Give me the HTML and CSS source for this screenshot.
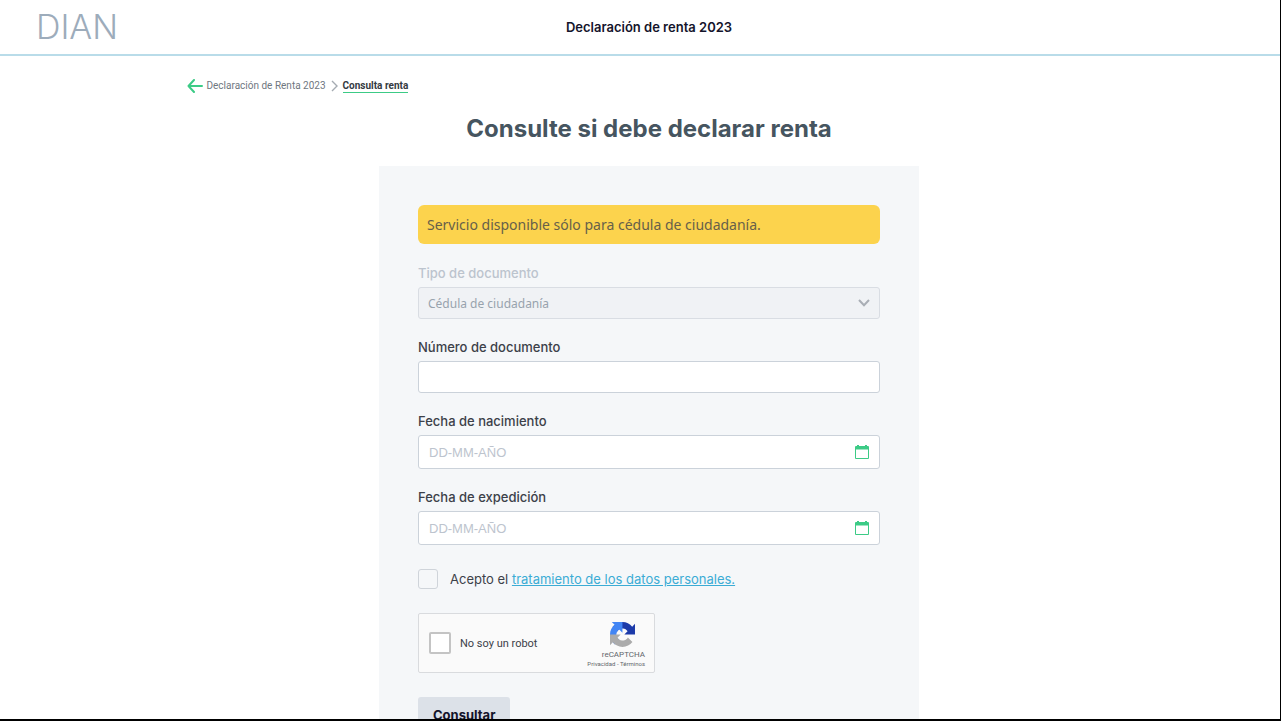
FILE: index.html
```html
<!DOCTYPE html>
<html lang="es">
<head>
    <meta charset="UTF-8">
    <meta name="viewport" content="width=device-width, initial-scale=1.0">
    <title>Declaración de renta 2023</title>
    <link rel="stylesheet" href="styles.css">
</head>
<body>
    <header class="header">
        <a class="logo" href="#">DIAN</a>
        <p class="header-title">Declaración de renta 2023</p>
    </header>

    <main class="main-content">
        <nav class="breadcrumb" aria-label="Ruta">
            <a class="back" href="#" aria-label="Volver">
                <svg width="16" height="14" viewBox="0 0 16 14" fill="none" stroke="#3ccb86" stroke-width="2" stroke-linecap="round" stroke-linejoin="round">
                    <path d="M15 7H1.5M7 1L1.5 7L7 13"/>
                </svg>
            </a>
            <a href="#">Declaración de Renta 2023</a>
            <svg class="separator" width="7" height="12" viewBox="0 0 7 12" fill="none" stroke="#a5abb2" stroke-width="1.4">
                <path d="M1 1L6 6L1 11"/>
            </svg>
            <a class="current" href="#" aria-current="page">Consulta renta</a>
        </nav>

        <h1>Consulte si debe declarar renta</h1>

        <form class="form-card">
            <div class="alert">Servicio disponible sólo para cédula de ciudadanía.</div>

            <div class="form-group disabled">
                <label for="tipo">Tipo de documento</label>
                <div class="select-box">
                    <select id="tipo" disabled>
                        <option>Cédula de ciudadanía</option>
                    </select>
                    <svg width="12" height="8" viewBox="0 0 12 8" fill="none" stroke="#a9aeb5" stroke-width="2">
                        <path d="M1 1L6 6.2L11 1"/>
                    </svg>
                </div>
            </div>

            <div class="form-group">
                <label for="numero">Número de documento</label>
                <input class="text-input" type="text" id="numero">
            </div>

            <div class="form-group">
                <label for="nacimiento">Fecha de nacimiento</label>
                <div class="date-box">
                    <input type="text" id="nacimiento" placeholder="DD-MM-AÑO">
                    <button type="button" aria-label="Abrir calendario">
                        <svg width="14" height="14" viewBox="0 0 14 14">
                            <path fill="#3ccb86" fill-rule="evenodd" d="M2 0H4V1H10V0H12V1H13Q14 1 14 2V13Q14 14 13 14H1Q0 14 0 13V2Q0 1 1 1H2ZM1 4.5V13H13V4.5Z"/>
                        </svg>
                    </button>
                </div>
            </div>

            <div class="form-group">
                <label for="expedicion">Fecha de expedición</label>
                <div class="date-box">
                    <input type="text" id="expedicion" placeholder="DD-MM-AÑO">
                    <button type="button" aria-label="Abrir calendario">
                        <svg width="14" height="14" viewBox="0 0 14 14">
                            <path fill="#3ccb86" fill-rule="evenodd" d="M2 0H4V1H10V0H12V1H13Q14 1 14 2V13Q14 14 13 14H1Q0 14 0 13V2Q0 1 1 1H2ZM1 4.5V13H13V4.5Z"/>
                        </svg>
                    </button>
                </div>
            </div>

            <div class="terms">
                <input type="checkbox" id="acepto">
                <label for="acepto">Acepto el <a href="#">tratamiento de los datos personales.</a></label>
            </div>

            <div class="captcha">
                <input type="checkbox" id="robot">
                <label for="robot">No soy un robot</label>
                <div class="captcha-brand">
                    <svg width="25" height="25" viewBox="0 0 64 64">
                        <path fill="#1c3aa9" d="M64 31.955l-.033-1.37V4.687l-7.16 7.16C50.948 4.674 42.033.093 32.05.093c-10.4 0-19.622 4.96-25.458 12.64l11.736 11.86a15.55 15.55 0 0 1 4.754-5.334c2.05-1.6 4.952-2.906 8.968-2.906.485 0 .86.057 1.135.163 4.976.393 9.288 3.14 11.828 7.124l-8.307 8.307L64 31.953"/>
                        <path fill="#4285f4" d="M31.862.094l-1.37.033H4.594l7.16 7.16C4.58 13.147 0 22.06 0 32.046c0 10.4 4.96 19.622 12.64 25.458L24.5 45.768a15.55 15.55 0 0 1-5.334-4.754c-1.6-2.05-2.906-4.952-2.906-8.968 0-.485.057-.86.163-1.135.393-4.976 3.14-9.288 7.124-11.828l8.307 8.307L31.86.095"/>
                        <path fill="#ababab" d="M.001 32.045l.033 1.37v25.898l7.16-7.16c5.86 7.173 14.774 11.754 24.76 11.754 10.4 0 19.622-4.96 25.458-12.64l-11.736-11.86a15.55 15.55 0 0 1-4.754 5.334c-2.05 1.6-4.952 2.906-8.968 2.906-.485 0-.86-.057-1.135-.163-4.976-.393-9.288-3.14-11.828-7.124l8.307-8.307L.001 32.046"/>
                    </svg>
                    <span class="captcha-name">reCAPTCHA</span>
                    <span class="captcha-links"><a href="#">Privacidad</a> - <a href="#">Términos</a></span>
                </div>
            </div>

            <button class="btn" type="submit">Consultar</button>
        </form>
    </main>
</body>
</html>
```
FILE: styles.css
```css
* {
    margin: 0;
    padding: 0;
    box-sizing: border-box;
}

body {
    height: 100vh;
    overflow: hidden;
    background: #fff;
    border-right: 1px solid #000;
    border-bottom: 2px solid #000;
    font-family: Inter, sans-serif;
    color: #3c4149;
}

a {
    color: inherit;
    text-decoration: none;
}

svg {
    display: block;
}

.header {
    display: grid;
    grid-template-columns: 1fr auto 1fr;
    align-items: center;
    height: 56px;
    padding: 0 18px 0 36px;
    border-bottom: 2px solid #b9dce9;
}

.logo {
    font-size: 34px;
    font-weight: 300;
    line-height: 40px;
    color: #9dacbb;
}

.header-title {
    font-size: 13px;
    font-weight: 600;
    color: #14142b;
}

.main-content {
    padding-left: 18px;
}

.breadcrumb {
    display: flex;
    align-items: center;
    gap: 4px;
    max-width: 925px;
    height: 20px;
    margin: 20px auto 0;
    font-family: Roboto, sans-serif;
    font-size: 10px;
    line-height: 12px;
    color: #6f777f;
}

.separator {
    margin: 0 1px;
}

.current {
    font-weight: 700;
    color: #343a42;
    border-bottom: 1px solid #3ccb86;
}

h1 {
    margin: 17px 0 21px;
    font-size: 24px;
    line-height: 32px;
    text-align: center;
    color: #465560;
}

.form-card {
    max-width: 540px;
    margin: 0 auto;
    padding: 39px;
    background: #f5f7f9;
}

.alert {
    margin-bottom: 19px;
    padding: 0 9px;
    background: #fcd34d;
    border-radius: 6px;
    font-family: "Noto Sans", sans-serif;
    font-size: 14px;
    line-height: 39px;
    color: #67604a;
}

.form-group {
    margin-bottom: 18px;
}

.form-group label {
    display: block;
    margin-bottom: 4px;
    font-size: 13px;
    font-weight: 500;
    line-height: 20px;
}

.disabled label {
    color: #bcc4ce;
}

.select-box,
.text-input,
.date-box {
    display: flex;
    align-items: center;
    width: 100%;
    height: 32px;
    background: #fff;
    border: 1px solid #cbd2da;
    border-radius: 3px;
}

.text-input {
    padding: 0 10px;
    font-family: "Noto Sans", sans-serif;
    font-size: 13px;
}

.select-box {
    padding: 0 9px;
    background: #f0f2f5;
    border-color: #d9dde3;
}

.select-box select {
    flex: 1;
    appearance: none;
    background: none;
    border: none;
    font-family: "Noto Sans", sans-serif;
    font-size: 12px;
    color: #98a3ad;
    opacity: 1;
}

.date-box {
    height: 34px;
    padding: 0 10px;
}

.date-box input {
    flex: 1;
    min-width: 0;
    background: none;
    border: none;
    font-family: "Liberation Sans", sans-serif;
    font-size: 13px;
}

.date-box input::placeholder {
    color: #bdc4ce;
}

.date-box button {
    background: none;
    border: none;
    cursor: pointer;
}

.terms {
    display: flex;
    align-items: center;
    gap: 12px;
    margin-top: 24px;
    font-size: 13px;
    line-height: 20px;
}

.terms a {
    color: #3bacd5;
    text-decoration: underline;
}

.terms input,
.captcha > input {
    appearance: none;
    width: 20px;
    height: 20px;
    border: 1px solid #cfd4da;
    border-radius: 3px;
}

.captcha {
    display: flex;
    align-items: center;
    width: 237px;
    height: 60px;
    margin: 24px 0;
    padding: 0 9px 0 10px;
    background: #fafafa;
    border: 1px solid #d9dbde;
    border-radius: 2px;
    font-family: Roboto, sans-serif;
    font-size: 11px;
}

.captcha > input {
    width: 22px;
    height: 22px;
    margin-right: 9px;
    background: #fff;
    border: 2px solid #c4c4c4;
    border-radius: 2px;
}

.captcha-brand {
    display: flex;
    flex-direction: column;
    align-items: flex-end;
    margin-left: auto;
    padding-top: 4px;
    color: #62666b;
}

.captcha-brand svg {
    margin-right: 10px;
}

.captcha-name {
    margin-top: 3px;
    font-size: 8px;
    line-height: 10px;
}

.captcha-links {
    font-size: 6px;
    line-height: 8px;
}

.btn {
    padding: 0 15px;
    background: #dce1e8;
    border: none;
    border-radius: 3px;
    font-family: inherit;
    font-size: 13px;
    font-weight: 700;
    line-height: 36px;
    color: #14142b;
    cursor: pointer;
}
```
